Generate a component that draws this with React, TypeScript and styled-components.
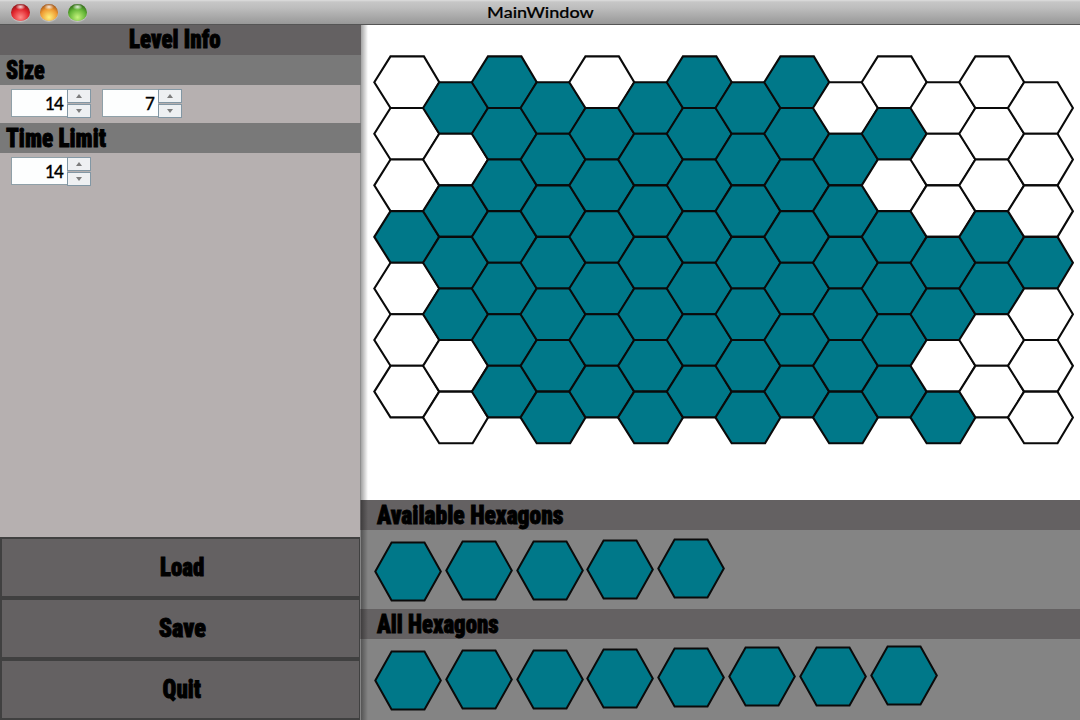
import React from "react";
import styled, { createGlobalStyle } from "styled-components";

const TEAL = "#007889";

const Global = createGlobalStyle`
  * { box-sizing: border-box; }
  body { margin: 0; overflow: hidden; background: #fff; }
`;

const Window = styled.div`
  width: 1080px;
  height: 720px;
  display: flex;
  flex-direction: column;
  background: #fff;
  color: #000;
`;

const TitleBar = styled.header`
  position: relative;
  flex: none;
  height: 25px;
  display: flex;
  align-items: center;
  justify-content: center;
  background: linear-gradient(#dedede 0, #c6c6c6 2px, #bdbdbd 8px, #989898 24px);
  border-bottom: 1px solid #555;
`;

const WindowTitle = styled.span`
  font: 500 15px/23px Lato, sans-serif;
  -webkit-text-stroke: 0.2px #000;
  transform: scaleX(1.2);
`;

const Lights = styled.div`
  position: absolute;
  left: 11px;
  top: 4px;
  display: flex;
  gap: 10px;
`;

const Light = styled.i<{ $dark: string; $mid: string; $glow: string }>`
  width: 18.5px;
  height: 17px;
  border-radius: 50%;
  background:
    radial-gradient(ellipse 5px 3px at 50% 17%, rgba(255, 255, 255, 0.85), transparent),
    radial-gradient(circle at 50% 78%, ${(p) => p.$glow} 0, ${(p) => p.$mid} 52%, ${(p) => p.$dark} 88%);
  box-shadow: 0 1px 1px rgba(255, 255, 255, 0.4);
`;

const Body = styled.div`
  flex: 1;
  min-height: 0;
  display: flex;
`;

const Sidebar = styled.aside`
  width: 361px;
  flex: none;
  display: flex;
  flex-direction: column;
  background: linear-gradient(90deg, #b6b0b0 360px, #8f8f8f 360px);
`;

const Label = styled.span<{ $scale: number; $origin?: string }>`
  display: inline-block;
  font: 900 26px/30px "Roboto Condensed", Roboto, sans-serif;
  -webkit-text-stroke: 0.9px #000;
  white-space: nowrap;
  transform: scaleX(${(p) => p.$scale});
  transform-origin: ${(p) => p.$origin ?? "left"} center;
`;

const PanelTitle = styled.div`
  height: 30px;
  padding-right: 12px;
  text-align: center;
  background: #646162;
  line-height: 28px;
  > span { line-height: 28px; }
`;

const SectionTitle = styled.div`
  height: 30px;
  padding-left: 6px;
  background: #797979;
`;

const Fields = styled.div`
  height: 38px;
  display: flex;
  gap: 11px;
  padding: 4px 11px 0;
`;

const Spinner = styled.div`
  width: 80px;
  height: 30px;
  display: grid;
  grid-template-columns: 56px 24px;
`;

const SpinValue = styled.div`
  height: 28px;
  padding-right: 4px;
  text-align: right;
  font: 500 17px/28px Lato, sans-serif;
  letter-spacing: -0.8px;
  -webkit-text-stroke: 0.3px #000;
  background: #fdfefe;
  border: 1px solid #8fa0a8;
  border-width: 1px 0 1px 1px;
`;

const SpinButtons = styled.div`
  display: grid;
  grid-template-rows: 14px 14px;
  gap: 1px;
`;

const SpinButton = styled.div`
  display: flex;
  align-items: center;
  justify-content: center;
  background: #eef0f2;
  border: 1px solid #8297a4;
`;

const Actions = styled.div`
  margin-top: auto;
`;

const ActionButton = styled.button`
  display: block;
  width: 361px;
  height: 61px;
  padding: 0 0 1px 3px;
  color: #000;
  background: #646162;
  border: 2px solid #404040;
`;

const Main = styled.main`
  position: relative;
  flex: 1;
  display: flex;
  flex-direction: column;
  background: #fff;
  &::after {
    content: "";
    position: absolute;
    inset: 0 auto 0 0;
    width: 7px;
    background: linear-gradient(90deg, rgba(0, 0, 0, 0.36), rgba(0, 0, 0, 0.2) 45%, transparent);
  }
`;

const BoardArea = styled.div`
  height: 475px;
`;

const ShelfTitle = styled.div`
  height: 30px;
  margin-left: -1px;
  padding-left: 17px;
  background: #646162;
`;

const Shelf = styled.div<{ $height: number }>`
  height: ${(p) => p.$height}px;
  margin-left: -1px;
  padding: 10px 0 0 13px;
  display: flex;
  background: #848484;
`;

const ShelfHex = styled.svg<{ $lift: number }>`
  flex: none;
  width: 70.8px;
  height: 62px;
  margin-top: ${(p) => -p.$lift}px;
`;

// One string per column: "#" is a placed hexagon, "." an empty cell.
const COLUMNS = [
  "...#...", "#.###..", "#######", "#######", ".######", "#######", "#######",
  "#######", "#######", ".######", ".#.####", "...##.#", "...##..", "...#...",
];

function cellPoints(col: number, row: number) {
  const x = 13.3 + col * 48.74;
  const y = 31.4 + row * 51.57 + (col % 2 ? 25.8 : 0);
  return [[0, 25.8], [16.2, 0], [49.6, 0], [65, 25.8], [49.6, 51.57], [16.2, 51.57]]
    .map(([dx, dy]) => `${(x + dx).toFixed(2)},${(y + dy).toFixed(2)}`)
    .join(" ");
}

const CELLS = COLUMNS.flatMap((column, col) =>
  [...column].map((mark, row) => ({ col, row, filled: mark === "#" }))
);

function Board() {
  return (
    <svg width="719" height="475" display="block">
      {CELLS.map(({ col, row, filled }) => (
        <polygon
          key={`${col}-${row}`}
          points={cellPoints(col, row)}
          fill={filled ? TEAL : "#fff"}
          stroke="#0a0a0a"
          strokeWidth={2.1}
        />
      ))}
    </svg>
  );
}

const LIFTS = [0, 1, 1, 2, 3, 4, 4, 5];

function HexShelf({ count, height }: { count: number; height: number }) {
  return (
    <Shelf $height={height}>
      {LIFTS.slice(0, count).map((lift, i) => (
        <ShelfHex key={i} $lift={lift} viewBox="0 0 70.8 62">
          <polygon
            points="2.3,31.5 18.6,2.5 51.5,2.5 67.8,31.5 51.5,60.6 18.6,60.6"
            fill={TEAL}
            stroke="#0a0a0a"
            strokeWidth="2"
          />
        </ShelfHex>
      ))}
    </Shelf>
  );
}

function NumberSpinner({ value }: { value: number }) {
  return (
    <Spinner>
      <SpinValue>{value}</SpinValue>
      <SpinButtons>
        <SpinButton>
          <svg width="6" height="4"><path d="M0 4 3 0l3 4z" fill="#7c7c7c" /></svg>
        </SpinButton>
        <SpinButton>
          <svg width="6" height="4"><path d="M0 0h6L3 4z" fill="#7c7c7c" /></svg>
        </SpinButton>
      </SpinButtons>
    </Spinner>
  );
}

export default function App() {
  return (
    <Window>
      <Global />
      <TitleBar>
        <Lights>
          <Light $dark="#7d1013" $mid="#e0252c" $glow="#ff8a86" />
          <Light $dark="#8f4310" $mid="#ee9a32" $glow="#fff07a" />
          <Light $dark="#24560f" $mid="#62b436" $glow="#c4f37c" />
        </Lights>
        <WindowTitle>MainWindow</WindowTitle>
      </TitleBar>
      <Body>
        <Sidebar>
          <PanelTitle><Label $scale={0.885} $origin="center">Level Info</Label></PanelTitle>
          <SectionTitle><Label $scale={0.85}>Size</Label></SectionTitle>
          <Fields>
            <NumberSpinner value={14} />
            <NumberSpinner value={7} />
          </Fields>
          <SectionTitle><Label $scale={0.89}>Time Limit</Label></SectionTitle>
          <Fields>
            <NumberSpinner value={14} />
          </Fields>
          <Actions>
            <ActionButton><Label $scale={0.88} $origin="center">Load</Label></ActionButton>
            <ActionButton><Label $scale={0.93} $origin="center">Save</Label></ActionButton>
            <ActionButton><Label $scale={0.88} $origin="center">Quit</Label></ActionButton>
          </Actions>
        </Sidebar>
        <Main>
          <BoardArea><Board /></BoardArea>
          <ShelfTitle><Label $scale={0.905}>Available Hexagons</Label></ShelfTitle>
          <HexShelf count={5} height={79} />
          <ShelfTitle><Label $scale={0.878}>All Hexagons</Label></ShelfTitle>
          <HexShelf count={8} height={81} />
        </Main>
      </Body>
    </Window>
  );
}
